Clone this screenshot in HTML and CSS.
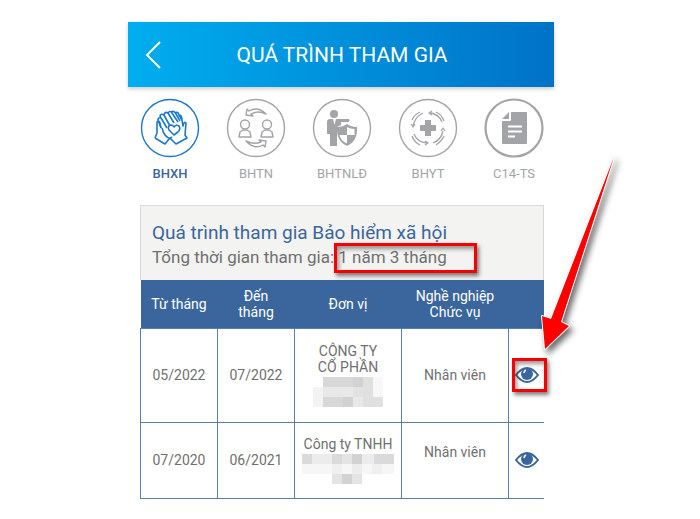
FILE: index.html
```html
<!DOCTYPE html>
<html lang="vi">
<head>
  <meta charset="UTF-8" />
  <meta name="viewport" content="width=device-width, initial-scale=1.0"/>
  <title>Quá trình tham gia</title>
  <link rel="stylesheet" href="styles.css">
</head>
<body>
  <div class="screen">
    <header class="topbar">
      <button class="back-btn" type="button" aria-label="Quay lại">
        <svg width="18" height="30" viewBox="0 0 18 30"><path d="M15 2 L2 15 L15 28" /></svg>
      </button>
      <h1>QUÁ TRÌNH THAM GIA</h1>
    </header>

    <nav class="tabs">
      <button class="tab active" type="button">
        <svg class="tab-icon" viewBox="0 0 60 60">
          <circle cx="30" cy="30" r="28.5" />
          <g stroke-width="1.6">
            <path d="M15 40 L17 35 L17 24 Q19 22 20 25 L21 30" />
            <path d="M15 40 L25 46 L29 41" />
            <path d="M21 30 L18 22 Q18 19 21 20 L27 30 M21 20 L20 18 Q21 15 24 17 L30 28 M24 17 Q25 13 28 15 L34 25 M28 15 Q30 12 32 15 L38 24" />
            <path d="M31 14 Q34 12 36 16 L40 23 M35 15 Q38 13 39 17 L42 22 M39 17 Q42 17 42 22" />
            <path d="M42 22 L43 28 Q44 23 46 25 L45 37 L47 40 L36 46 L31 41 Q24 39 22 30" />
            <path d="M29 41 L32 39" />
            <path d="M34 37 L29 32 Q27 28 31 27 Q33 27 34 29 Q36 26 39 28 Q41 31 38 34 Z" />
          </g>
        </svg>
        <span>BHXH</span>
      </button>
      <button class="tab" type="button">
        <svg class="tab-icon" viewBox="0 0 60 60">
          <circle cx="30" cy="30" r="28.5" />
          <g stroke-width="1.4">
            <circle cx="19" cy="26.5" r="4.5" />
            <path d="M13 39 L14 34 L17 32 H21 L24 34 L25 39 Z" />
            <circle cx="41" cy="26.5" r="4.5" />
            <path d="M35 39 L36 34 L39 32 H43 L46 34 L47 39 Z" />
            <path d="M20 17 L21 11 L23 13 Q32 8 40 16 Q32 12 25 16 L27 18 Z" />
            <path d="M40 43 L39 49 L37 47 Q28 52 20 43 Q28 47 35 44 L33 42 Z" />
          </g>
        </svg>
        <span>BHTN</span>
      </button>
      <button class="tab" type="button">
        <svg class="tab-icon" viewBox="0 0 60 60">
          <circle cx="30" cy="30" r="28.5" />
          <g class="solid">
            <circle cx="22" cy="16" r="4" />
            <path d="M15 24 Q15 21 18 21 H37 Q38 22 37 24 H29 V27 L25 29 V48 H18 V36 H15 Z" />
            <path d="M35 26 Q39 29 45 29 Q46 43 35 48 Q24 43 25 29 Q31 29 35 26 Z" />
          </g>
          <path class="blank" d="M21 21 L22.5 27 L24 21 Z M35 37 H27.5 Q28 42 35 45.5 Z M35 29 Q38 31 42.5 31 V37 H35 Z" />
        </svg>
        <span>BHTNLĐ</span>
      </button>
      <button class="tab" type="button">
        <svg class="tab-icon" viewBox="0 0 60 60">
          <circle cx="30" cy="30" r="28.5" />
          <path class="solid" d="M27 22 H33 V27 H38 V33 H33 V38 H27 V33 H22 V27 H27 Z" />
          <g stroke-width="1.3">
            <path d="M31 15 Q40 15 44 24 M45 33 Q43 42 35 45 M29 45 Q19 44 16 36 M15 28 Q17 19 25 15" />
            <path d="M38 14 Q44 17 46 23 M46 38 Q44 43 38 47 M22 47 Q16 44 14 38 M14 22 Q16 17 22 14" />
            <path d="M34 13 L31 15 L34 17 M43 33 L45 30 L47 33 M27 43 L30 45 L27 47 M13 26 L15 29 L17 26" />
          </g>
        </svg>
        <span>BHYT</span>
      </button>
      <button class="tab" type="button">
        <svg class="tab-icon" viewBox="0 0 60 60">
          <circle cx="30" cy="30" r="28.5" stroke-width="2.2" />
          <path class="solid" d="M27 14 H42 Q43 14 43 15 V45 Q43 46 42 46 H19 Q18 46 18 45 V23 H26 Q27 23 27 22 Z M18 21 L25 14 V21 Z" />
          <path class="lines" d="M24 28.5 H38 M24 33.5 H38 M24 38.5 H31" />
        </svg>
        <span>C14-TS</span>
      </button>
    </nav>

    <main class="card">
      <div class="summary">
        <h2>Quá trình tham gia Bảo hiểm xã hội</h2>
        <p>Tổng thời gian tham gia: <span class="marked">1 năm 3 tháng</span></p>
      </div>

      <table class="history">
        <thead>
          <tr>
            <th class="col-date">Từ tháng</th>
            <th class="col-date">Đến<br>tháng</th>
            <th class="col-unit">Đơn vị</th>
            <th class="col-unit">Nghề nghiệp<br>Chức vụ</th>
            <th class="col-view"></th>
          </tr>
        </thead>
        <tbody>
          <tr class="row-tall">
            <td>05/2022</td>
            <td>07/2022</td>
            <td>
              CÔNG TY<br>CỔ PHẦN
              <svg class="mosaic" width="70" height="30" viewBox="0 0 70 30">
                <path fill="#f3f3f3" d="M0 10h70v20H0z" />
                <path fill="#f8f8f8" d="M60 0h10v20H60z" />
                <path fill="#d8d8d8" d="M10 0h30v10H10zM10 20h20v10H10z" />
                <path fill="#d2d2d2" d="M40 0h10v10H40zM30 20h10v10H30z" />
                <path fill="#e0e0e0" d="M50 0h10v20H50zM50 20h20v10H50z" />
                <path fill="#e8e8e8" d="M10 10h30v10H10zM40 20h10v10H40z" />
                <path fill="#e2e2e2" d="M40 10h10v10H40z" />
              </svg>
            </td>
            <td>Nhân viên</td>
            <td class="view">
              <div class="target">
                <button class="eye-btn" type="button" aria-label="Xem chi tiết">
                  <svg width="24" height="16" viewBox="0 0 24 16">
                    <path class="lid" d="M1 8 Q12 -6 23 8 Q12 22 1 8 Z" />
                    <circle cx="12" cy="7" r="6" />
                    <path class="glint" d="M9 6 Q9 4 11 3" />
                  </svg>
                </button>
                <svg class="arrow" width="90" height="210" viewBox="0 0 90 210">
                  <path d="M80 8 L17 170 L8 167 L11 200 L35 177 L27 173 Z" />
                </svg>
              </div>
            </td>
          </tr>
          <tr class="row-short">
            <td>07/2020</td>
            <td>06/2021</td>
            <td>
              Công ty TNHH
              <svg class="mosaic" width="92" height="30" viewBox="0 0 92 30">
                <path fill="#f6f6f6" d="M0 10h92v10H0z" />
                <path fill="#dadada" d="M0 0h10v10H0zM30 0h10v10H30zM72 0h20v10H72z" />
                <path fill="#ececec" d="M10 0h20v10H10zM60 0h12v10H60zM50 10h10v10H50z" />
                <path fill="#e4e4e4" d="M40 0h10v10H40zM30 20h10v10H30zM50 20h10v10H50z" />
                <path fill="#d2d2d2" d="M50 0h10v10H50zM40 20h10v10H40z" />
                <path fill="#efefef" d="M30 10h10v10H30zM70 10h10v10H70z" />
              </svg>
            </td>
            <td class="raised">Nhân viên</td>
            <td class="view">
              <button class="eye-btn" type="button" aria-label="Xem chi tiết">
                <svg width="24" height="16" viewBox="0 0 24 16">
                  <path class="lid" d="M1 8 Q12 -6 23 8 Q12 22 1 8 Z" />
                  <circle cx="12" cy="7" r="6" />
                  <path class="glint" d="M9 6 Q9 4 11 3" />
                </svg>
              </button>
            </td>
          </tr>
        </tbody>
      </table>
    </main>
  </div>
</body>
</html>
```

FILE: styles.css
```css
* {
  box-sizing: border-box;
}
body {
  margin: 0;
  padding: 22px 18px 20px 0;
  background: #fff;
  color: #707070;
  font-family: Roboto, sans-serif;
  font-size: 14px;
  line-height: 16px;
}
button {
  padding: 0;
  border: none;
  background: none;
  font: inherit;
  color: inherit;
  cursor: pointer;
}
svg {
  display: block;
  fill: none;
}
.screen {
  max-width: 426px;
  margin: 0 auto;
}

/* top bar */
.topbar {
  display: grid;
  grid-template-columns: 52px 1fr 50px;
  align-items: center;
  height: 65px;
  background: linear-gradient(to right, #00aeef, #0072c8);
  box-shadow: 0 2px 4px rgba(0, 0, 0, 0.2);
  color: #fff;
}
.topbar h1 {
  margin: 0;
  font-size: 21px;
  font-weight: 400;
  line-height: 24px;
  text-align: center;
}
.back-btn {
  padding-left: 17px;
}
.back-btn svg {
  stroke: #fff;
  stroke-width: 2;
}

/* tabs */
.tabs {
  display: flex;
  justify-content: center;
  padding: 11px 0 0 2px;
}
.tab {
  display: flex;
  flex: 0 0 86px;
  flex-direction: column;
  align-items: center;
  gap: 8px;
  color: #a3a4a8;
  font-size: 13px;
}
.tab.active {
  color: #3a669d;
  font-weight: 500;
}
.tab-icon {
  width: 60px;
  height: 60px;
  stroke: #a3a4a8;
  stroke-width: 1.4;
  stroke-linejoin: round;
}
.active .tab-icon {
  stroke: #1b78c8;
}
.tab-icon .solid {
  fill: #a3a4a8;
  stroke: none;
}
.tab-icon .blank {
  fill: #fff;
  stroke: none;
}
.tab-icon .lines {
  stroke: #fff;
  stroke-width: 2;
}

/* summary box */
.card {
  margin: 23px 10px 0 12px;
}
.summary {
  padding: 15px 11px 11px;
  border: 1px solid #d8d8d8;
  border-bottom: none;
  background: #f3f3f2;
}
.summary h2 {
  margin: 0;
  color: #3a669d;
  font-size: 19px;
  font-weight: 400;
  line-height: 24px;
}
.summary p {
  margin: 0;
  font-size: 17px;
  line-height: 24px;
}
.marked {
  position: relative;
}
.marked::after {
  content: "";
  position: absolute;
  inset: -4px -30px -6px -4px;
  border: 3px solid #f80000;
  box-shadow: 2px 3px 4px rgba(0, 0, 0, 0.5), inset 2px 3px 4px rgba(0, 0, 0, 0.4);
}

/* history table */
.history {
  width: 100%;
  table-layout: fixed;
  border-collapse: collapse;
  text-align: center;
}
.history th {
  height: 48px;
  padding: 0;
  background: #3a669d;
  color: #fff;
  font-weight: 400;
}
.history td {
  padding: 0;
  border: 1px solid #5580ae;
}
.history td.view {
  border-right: none;
}
.history td.raised {
  padding-bottom: 16px;
}
.col-date {
  width: 77px;
}
.col-unit {
  width: 107px;
}
.row-tall {
  height: 94px;
}
.row-short {
  height: 76px;
}
.mosaic {
  margin: 2px auto 0;
  shape-rendering: crispEdges;
}
.eye-btn {
  display: block;
  margin: 0 auto;
}
.eye-btn svg {
  fill: #3a669d;
}
.eye-btn .lid {
  fill: #fff;
  stroke: #3a669d;
  stroke-width: 2;
}
.eye-btn .glint {
  fill: none;
  stroke: #fff;
  stroke-width: 1.5;
}

/* red callout on the first eye button */
.target {
  position: relative;
}
.target::after {
  content: "";
  position: absolute;
  inset: -9px -3px -9px 3px;
  border: 3px solid #f80000;
  box-shadow: 2px 3px 4px rgba(0, 0, 0, 0.5), inset 2px 3px 4px rgba(0, 0, 0, 0.4);
  pointer-events: none;
}
.arrow {
  position: absolute;
  right: -80px;
  bottom: 24px;
  overflow: visible;
  fill: #fd0000;
  stroke: #fff;
  stroke-width: 2;
  stroke-linejoin: round;
  paint-order: stroke;
  filter: drop-shadow(3px 4px 3px rgba(0, 0, 0, 0.6));
  pointer-events: none;
}
```
